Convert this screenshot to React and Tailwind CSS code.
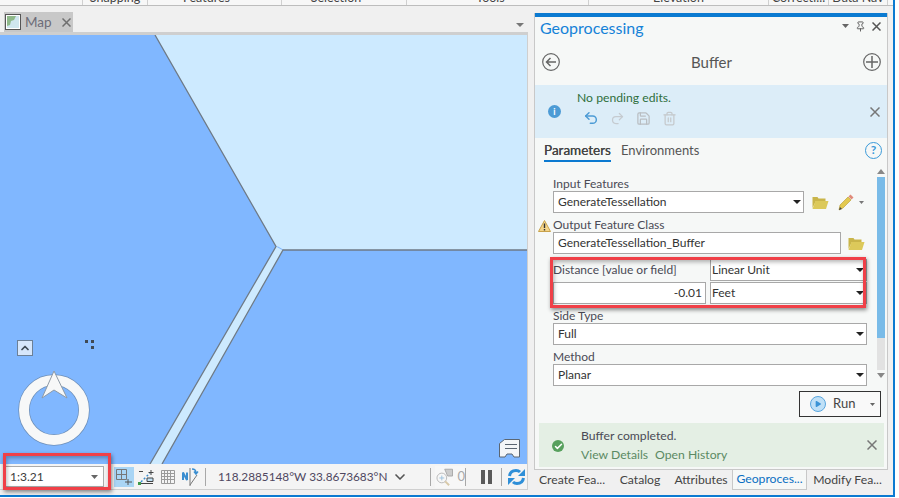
import React from "react";
import { ChevronUp, ChevronDown, Pin, Undo2, Redo2, Save, Trash2, Check, Play } from "lucide-react";

function Caret({ className = "" }) {
  return <svg width="8" height="4" viewBox="0 0 8 4" className={className}><path d="M0 0h8L4 4z" fill="#222" /></svg>;
}

function Cross({ s = 9, c = "#777", w = 1.5, className = "" }) {
  return (
    <svg width={s} height={s} viewBox={`0 0 ${s} ${s}`} className={className} fill="none" stroke={c} strokeWidth={w}>
      <path d={`M0.500 0.500L${s - 0.5} ${s - 0.5}M${s - 0.5} 0.500L0.500 ${s - 0.5}`} />
    </svg>
  );
}

function Folder({ className = "" }) {
  return (
    <svg width="17" height="13" viewBox="0 0 17 13" className={className}>
      <path d="M0.500 3V1h5l1 1.500h7V5H4L0.500 12z" fill="#c9b54a" />
      <path d="M0.500 13l3-8h13l-2.500 8z" fill="#dcc95a" />
    </svg>
  );
}

function Pencil() {
  return (
    <svg width="16" height="17" viewBox="0 0 16 17">
      <path d="M1 16l1-5L10 3l3 3-8 8z" fill="#e3c94f" stroke="#b59a30" strokeWidth="0.600" />
      <path d="M10.500 2.500l2-2 3 3-2 2z" fill="#e08a7a" />
      <path d="M1 16l1-3 2 2z" fill="#444" />
    </svg>
  );
}

function Select({ label, w = "w-[314px]" }) {
  return (
    <div className={`${w} h-[22px] bg-white border border-[#a8a8a8] flex items-center justify-between pl-1 pr-[2px] text-[12px] text-[#333]`}>
      <span>{label}</span>
      <Caret />
    </div>
  );
}

function Label({ children, className = "" }) {
  return <div className={`h-[16px] leading-[16px] text-[12px] text-[#4a4a55] whitespace-nowrap ${className}`}>{children}</div>;
}

function Field({ label, value }) {
  return (
    <div className="mt-[4px]">
      <Label className="-mb-px">{label}</Label>
      <Select label={value} />
    </div>
  );
}

function Tab({ children, active, w }) {
  return (
    <div className={`${w} h-[20px] flex items-center justify-center text-[12.2px] whitespace-nowrap ${active ? "bg-[#f6f8f7] text-[#0a6fc2] border-x border-b border-[#c8c8c8]" : "text-[#444]"}`}>
      {children}
    </div>
  );
}

function RibbonLabel({ w, children, className = "", bar = true }) {
  return (
    <div className={`${w} h-[5px] overflow-hidden flex justify-center ${bar ? "border-r border-[#d0d0d0]" : ""} ${className}`}>
      <span className="text-[12.5px] text-[#444] leading-[14px] -mt-[9px] whitespace-nowrap">{children}</span>
    </div>
  );
}

function Divider({ className = "" }) {
  return <div className={`w-px h-[18px] bg-[#a8a8a8] shrink-0 ${className}`} />;
}

function Refresh({ className = "" }) {
  return (
    <svg width="17" height="18" viewBox="0 0 17 18" className={className}>
      <path d="M1.500 8C2 4.500 4.500 2.500 8 2.500c1.600 0 3 .5 4 1.500" fill="none" stroke="#2e8fd8" strokeWidth="3" />
      <path d="M10 8h7V1z" fill="#2e8fd8" />
      <path d="M15.500 10c-.5 3.500-3 5.500-6.500 5.500-1.600 0-3-.5-4-1.500" fill="none" stroke="#2e8fd8" strokeWidth="3" />
      <path d="M7 10H0v7z" fill="#2e8fd8" />
    </svg>
  );
}

const redBox = "border-[3px] border-[#f04048] shadow-[1px_2px_4px_rgba(0,0,0,0.45),inset_1px_2px_4px_rgba(0,0,0,0.3)] pointer-events-none";

export default function App() {
  return (
    <div className="relative w-[899px] h-[498px] overflow-hidden bg-white" style={{ fontFamily: 'Lato, "Noto Sans", sans-serif' }}>
      <div className="w-[895px] h-[497px] border-r-2 border-b-2 border-[#0b7ad1] bg-[#f0f0f0] flex flex-col">
        <div className="h-[5px] bg-[#f7f7f7] flex shrink-0">
          <RibbonLabel w="w-[83px]" />
          <RibbonLabel w="w-[65px]">Snapping</RibbonLabel>
          <RibbonLabel w="w-[134px]" className="pr-[16px]">Features</RibbonLabel>
          <RibbonLabel w="w-[125px]" className="pr-[16px]">Selection</RibbonLabel>
          <RibbonLabel w="w-[182px]" className="pr-[14px]">Tools</RibbonLabel>
          <RibbonLabel w="w-[180px]">Elevation</RibbonLabel>
          <RibbonLabel w="w-[60px]">Correcti...</RibbonLabel>
          <RibbonLabel w="w-[59px]">Data Nav</RibbonLabel>
        </div>
        <div className="h-px bg-[#bdbdbd] shrink-0" />
        <div className="flex flex-1 min-h-0">
          <div className="w-[528px] shrink-0 flex flex-col">
            <div className="h-[26px] pt-[6px] flex items-end justify-between shrink-0">
              <div className="ml-[4px] h-[20px] w-[69px] bg-[#c8c8c8] flex items-center pl-[1px]">
                <svg width="16" height="16" viewBox="0 0 16 16">
                  <rect x="0.500" y="0.500" width="15" height="15" fill="#fff" stroke="#555" />
                  <path d="M2 2h12v12H2z" fill="#cfe6ef" />
                  <path d="M2 2h9l-2 4-3 1-1 4-3 1z" fill="#8fb98a" />
                </svg>
                <span className="ml-[4px] text-[13.500px] text-[#6c6c78]">Map</span>
                <Cross s={9} c="#6f6f6f" className="ml-[10px]" />
              </div>
              <svg width="8" height="4" viewBox="0 0 8 4" className="mr-[4px] mb-[5px]"><path d="M0 0h8L4 4z" fill="#777" /></svg>
            </div>
            <div className="h-[3px] bg-[#cfcfcf] shrink-0" />
            <div className="h-[429px] shrink-0 flex">
              <div className="relative flex-1 bg-[#80b7ff] overflow-hidden">
                <svg width="527" height="429" viewBox="0 35 527 429" className="absolute left-0 top-0">
                  <path d="M155 35L276 246.500H278L284 250H527V35z" fill="#cdeaff" />
                  <path d="M276 246.500L150 464H162L283 250.500L276 246.500z" fill="#cdeaff" />
                  <path d="M155 35L276 246.500L150 464" fill="none" stroke="#6e7a86" strokeWidth="1.300" />
                  <path d="M527 250H283L162 464" fill="none" stroke="#6e7a86" strokeWidth="1.300" />
                </svg>
                <div className="absolute left-[17px] top-[305px] w-[16px] h-[16px] bg-[#d6e6fb] border border-[#6c8097] flex items-center justify-center">
                  <ChevronUp size={12} strokeWidth={3.500} className="text-[#3f4a55]" />
                </div>
                <svg width="9" height="9" viewBox="0 0 9 9" className="absolute left-[85px] top-[305px]">
                  <path d="M0 0h3v3H0zM6 0h3v3H6zM6 6h3v3H6z" fill="#3f4954" />
                </svg>
                <svg width="76" height="84" viewBox="0 0 76 84" className="absolute left-[17px] top-[331px]">
                  <circle cx="37" cy="44" r="30" fill="none" stroke="#6d8fb8" strokeWidth="11.500" />
                  <circle cx="37" cy="44" r="30" fill="none" stroke="#f7f8f8" strokeWidth="10" />
                  <path d="M37 5L50 32L37 24L25 32z" fill="#f7f8f8" stroke="#8e9aa6" />
                </svg>
                <svg width="22" height="19" viewBox="0 0 22 19" className="absolute left-[499px] top-[404px]">
                  <path d="M5.500 0.500H20.500V18H15l-2-3H8l-2 3H0.500V4.500z" fill="#f4f6f8" stroke="#5b6672" />
                  <path d="M6 5.500h12M6 9.500h12" stroke="#5b6672" fill="none" />
                </svg>
              </div>
              <div className="w-px bg-[#cfcfcf]" />
            </div>
            <div className="h-[26px] shrink-0 flex items-center bg-[#f4f4f4] border-r border-b border-[#cfcfcf]">
              <div className="ml-[5px] w-[99px] h-[21px] shrink-0 bg-white border border-[#ababab] flex items-center justify-between pl-[4px] pr-[5px] text-[12px] text-[#3b3b3b]">
                <span>1:3.21</span>
                <svg width="7" height="4" viewBox="0 0 7 4"><path d="M0 0h7L3.500 4z" fill="#666" /></svg>
              </div>
              <div className="ml-[10px] w-[20px] h-[20px] shrink-0 bg-[#a9d5f5] flex items-center justify-center">
                <svg width="18" height="18" viewBox="0 0 18 18" fill="none" stroke="#777"><path d="M1.500 1.500h10v10h-10zM6.500 1.500v10M1.500 6.500h10" /><path d="M13 11v6M10 14h7" stroke="#555" /></svg>
              </div>
              <svg width="16" height="16" viewBox="0 0 16 16" className="ml-[4px] shrink-0" fill="none">
                <path d="M3 13L12 4" stroke="#3b8ed0" strokeDasharray="2 2" strokeWidth="1.500" />
                <path d="M1 2.500h4M1 14.500h14" stroke="#444" />
                <path d="M9 9h6v3.500H9z" stroke="#444" fill="#bfe0f5" />
                <path d="M13 1v5M10.500 3.500h5" stroke="#444" />
                <rect x="0" y="13" width="3" height="3" fill="#3f9a4a" />
              </svg>
              <svg width="14" height="14" viewBox="0 0 14 14" className="ml-[7px] shrink-0" fill="none" stroke="#9a9a9a">
                <path d="M.500 .500h13v13h-13zM3.500 .500v13M6.500 .500v13M9.500 .500v13M.500 3.500h13M.500 6.500h13M.500 9.500h13" />
              </svg>
              <svg width="17" height="18" viewBox="0 0 17 18" className="ml-[7px] shrink-0" fill="none">
                <path d="M1 12V4.500l4 7.500V4.500" stroke="#3b8ed0" strokeWidth="2" />
                <path d="M8 18V0" stroke="#777" />
                <path d="M8 17L15 7" stroke="#777" />
                <path d="M10 1c3 0 4 1 4 4M12 3.500l2 2.500 2-2.500" stroke="#3b8ed0" strokeWidth="1.500" />
              </svg>
              <Divider className="ml-[6px]" />
              <span className="ml-[12px] w-[167px] shrink-0 text-[11.8px] text-[#4f4760] whitespace-nowrap">118.2885148°W 33.8673683°N</span>
              <ChevronDown size={16} strokeWidth={2.500} className="ml-[7px] shrink-0 text-[#555]" />
              <Divider className="ml-[22px]" />
              <div className="ml-[4px] w-[30px] h-[22px] shrink-0 bg-[#f7f7f7] flex items-center">
                <svg width="20" height="18" viewBox="0 0 20 18" fill="none">
                  <circle cx="7" cy="10" r="5" stroke="#b9b9b9" />
                  <path d="M4.500 10h5M7 7.500v5" stroke="#9ec2dd" />
                  <path d="M10.500 13.500l4 4" stroke="#d8c9a8" strokeWidth="2" />
                  <path d="M10 1h8v7h-5z" fill="#ccc" stroke="#aaa" />
                </svg>
                <span className="text-[13px] text-[#a8a8a8] ml-[3px]">0</span>
              </div>
              <Divider className="h-[14px]" />
              <div className="ml-[15px] w-[4px] h-[14px] bg-[#5a5a5a] shrink-0" />
              <div className="ml-[3px] w-[4px] h-[14px] bg-[#5a5a5a] shrink-0" />
              <Divider className="ml-[9px]" />
              <Refresh className="ml-[6px] shrink-0" />
            </div>
          </div>

          <div className="ml-[6px] mt-[7px] w-[354px] flex flex-col">
            <div className="h-[457px] shrink-0 bg-[#f6f8f7] border-x border-b border-[#c8c8c8] flex flex-col">
              <div className="h-[4px] bg-[#0b7ad1] shrink-0" />
              <div className="h-[22px] flex justify-between pl-[5px] pr-[6px] shrink-0">
                <span className="text-[16px] leading-[22px] text-[#1582d8]">Geoprocessing</span>
                <div className="flex items-center gap-[6px] h-[16px] mt-[1px]">
                  <svg width="7" height="4" viewBox="0 0 7 4"><path d="M0 0h7L3.500 4z" fill="#666" /></svg>
                  <Pin size={11} className="text-[#555]" />
                  <Cross s={9} c="#555" />
                </div>
              </div>
              <div className="h-[46px] flex items-center justify-between pl-[7px] pr-[6px] shrink-0">
                <svg width="18" height="18" viewBox="0 0 18 18" fill="none" stroke="#666">
                  <circle cx="9" cy="9" r="8.300" strokeWidth="1.200" />
                  <path d="M14 9H4.500M8.500 5L4.500 9l4 4" strokeWidth="1.500" />
                </svg>
                <span className="text-[15px] text-[#555]">Buffer</span>
                <svg width="18" height="18" viewBox="0 0 18 18" fill="none" stroke="#666">
                  <circle cx="9" cy="9" r="8.300" strokeWidth="1.200" />
                  <path d="M9 3v12M3 9h12" strokeWidth="1.500" />
                </svg>
              </div>
              <div className="h-[53px] bg-[#dcedf8] flex items-start pl-[13px] pr-[7px] shrink-0">
                <div className="mt-[20px] w-[13px] h-[13px] rounded-full bg-[#4c9bd5] flex items-center justify-center text-white text-[9px] font-bold">i</div>
                <div className="ml-[16px] mt-[4px]">
                  <div className="text-[12.2px] leading-[18px] text-[#2f6f3c]">No pending edits.</div>
                  <div className="flex items-center gap-[11px] ml-[6px] mt-[3px]">
                    <Undo2 size={16} strokeWidth={2.200} className="text-[#4c9bd5]" />
                    <Redo2 size={15} strokeWidth={2} className="text-[#c5cbd0]" />
                    <Save size={15} className="text-[#b9bec2]" />
                    <Trash2 size={15} className="text-[#c5c9cc]" />
                  </div>
                </div>
                <Cross s={10} c="#777" className="ml-auto mt-[22px]" />
              </div>
              <div className="h-[24px] flex items-center pl-[9px] pr-[5px] shrink-0 text-[13px]">
                <div className="relative text-[#444] text-[13.500px] h-[24px] pt-px flex items-center [text-shadow:0_0_0.5px_#444]">
                  Parameters
                  <div className="absolute left-0 right-0 bottom-0 h-[2px] bg-[#0b7ad1]" />
                </div>
                <span className="ml-[10px] pt-px text-[#555]">Environments</span>
                <div className="ml-auto w-[17px] h-[17px] rounded-full border border-[#3a9ad9] flex items-center justify-center text-[#3a9ad9] text-[12px] font-bold">?</div>
              </div>

              <div className="h-[224px] shrink-0 flex">
                <div className="flex-1 min-w-0 pt-[14px] pl-[18px]">
                  <Label className="-mb-px">Input Features</Label>
                  <div className="flex items-center">
                    <Select label="GenerateTessellation" w="w-[251px]" />
                    <Folder className="ml-[8px]" />
                    <div className="ml-[9px]"><Pencil /></div>
                    <svg width="5" height="3" viewBox="0 0 5 3" className="ml-[5px]"><path d="M0 0h5L2.500 3z" fill="#777" /></svg>
                  </div>
                  <Label className="relative mt-[4px] -mb-px">
                    <svg width="13" height="12" viewBox="0 0 13 12" className="absolute -left-[15px] top-[3px]">
                      <path d="M6.500 0.500L12.500 11.500H0.500z" fill="#f4d58a" stroke="#c9a24a" />
                      <path d="M5.800 3.500h1.400v4.500H5.800zM5.800 9h1.400v1.500H5.800z" fill="#333" />
                    </svg>
                    Output Feature Class
                  </Label>
                  <div className="flex items-center">
                    <div className="w-[288px] h-[22px] bg-white border border-[#a8a8a8] flex items-center pl-1 text-[12px] text-[#333]">GenerateTessellation_Buffer</div>
                    <Folder className="ml-[7px]" />
                  </div>
                  <div className="mt-[5px] relative">
                    <div className="flex h-[22px]">
                      <div className="w-[157px] text-[12px] leading-[22px] text-[#4a4a55] whitespace-nowrap">Distance [value or field]</div>
                      <div className="w-[157px] h-[22px] bg-white border border-[#a8a8a8] flex items-center justify-between pl-[1px] pr-[2px] text-[12px] text-[#333]"><span>Linear Unit</span><Caret /></div>
                    </div>
                    <div className="flex mt-[1px]">
                      <div className="w-[153px] h-[22px] bg-white border border-[#a8a8a8] flex items-center justify-end pr-[3px] text-[12px] text-[#333]">-0.01</div>
                      <div className="w-[157px] h-[22px] ml-[4px] bg-white border border-[#a8a8a8] flex items-center justify-between pl-[1px] pr-[2px] text-[12px] text-[#333]"><span>Feet</span><Caret /></div>
                    </div>
                    <div className={`absolute -left-[3px] -top-[2px] w-[316px] h-[51px] ${redBox}`} />
                  </div>
                  <Field label="Side Type" value="Full" />
                  <Field label="Method" value="Planar" />
                </div>
                <div className="w-[8px] mx-[2px] pt-[7px] pb-[8px] flex flex-col shrink-0">
                  <svg width="8" height="5" viewBox="0 0 8 5" className="shrink-0"><path d="M0 5h8L4 0z" fill="#888" /></svg>
                  <div className="w-[8px] flex-1 bg-[#e2e2e2] my-[3px] flex flex-col"><div className="h-[161px] bg-[#79bbe8]" /></div>
                  <svg width="8" height="5" viewBox="0 0 8 5" className="shrink-0"><path d="M0 0h8L4 5z" fill="#888" /></svg>
                </div>
              </div>
              <div className="flex justify-end mt-[5px] pr-[6px] shrink-0">
                <div className="w-[82px] h-[26px] bg-[#f9f9f9] border border-[#333] flex items-center pl-[10px] pr-[5px] text-[13px] text-[#444]">
                  <div className="w-[16px] h-[16px] rounded-full bg-[#bfe0f7] border border-[#5aa6de] flex items-center justify-center">
                    <Play size={8} fill="#3a93d6" strokeWidth={0} />
                  </div>
                  <span className="ml-[7px]">Run</span>
                  <svg width="5" height="3" viewBox="0 0 5 3" className="ml-auto"><path d="M0 0h5L2.500 3z" fill="#666" /></svg>
                </div>
              </div>
              <div className="h-[44px] ml-[4px] mr-[3px] mt-[6px] bg-[#e4efe4] flex items-start pl-[13px] pr-[7px] shrink-0">
                <div className="mt-[17px] w-[12px] h-[12px] rounded-full bg-[#57a05d] flex items-center justify-center"><Check size={9} strokeWidth={4} className="text-white" /></div>
                <div className="ml-[17px] mt-[4px] text-[12.2px] leading-[18px]">
                  <div className="text-[#4a4a55]">Buffer completed.</div>
                  <div className="text-[#5b8a63] mt-[1px]">View Details<span className="ml-[7px]">Open History</span></div>
                </div>
                <Cross s={10} c="#777" className="ml-auto mt-[17px]" />
              </div>
            </div>
            <div className="flex h-[25px] shrink-0">
              <Tab w="w-[76px]">Create Fea...</Tab>
              <Tab w="w-[60px]">Catalog</Tab>
              <Tab w="w-[62px]">Attributes</Tab>
              <Tab w="w-[75px]" active>Geoproces...</Tab>
              <Tab w="w-[81px]">Modify Fea...</Tab>
            </div>
          </div>
        </div>
      </div>
      <div className={`absolute left-[3px] top-[453px] w-[108px] h-[37px] ${redBox}`} />
    </div>
  );
}
